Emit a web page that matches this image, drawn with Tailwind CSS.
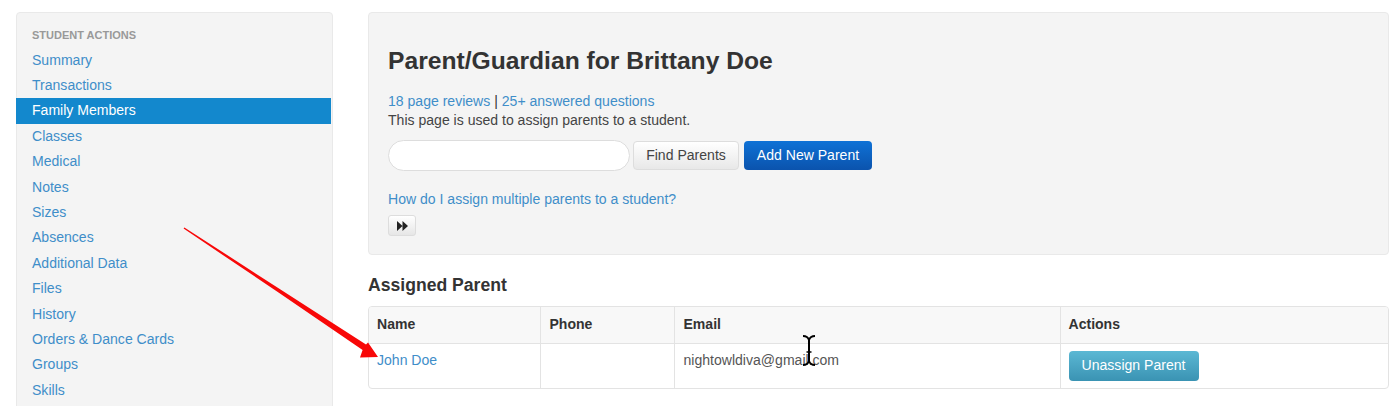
<!DOCTYPE html>
<html lang="en">
<head>
  <meta charset="UTF-8">
  <title>Parent/Guardian</title>
  <script src="https://cdn.jsdelivr.net/npm/@tailwindcss/browser@4"></script>
</head>
<body class="bg-white font-['Liberation_Sans',Arial,sans-serif] text-[14.05px] text-[#333] overflow-hidden">
  <div class="relative h-[406px] overflow-hidden">
    <div class="flex items-start gap-[35px] pl-[16px] pr-[7px] pt-[12px]">

      <!-- Sidebar -->
      <aside class="w-[317px] h-[420px] shrink-0 bg-[#f4f4f4] border border-[#e9e9e9] rounded-[4px] pt-[15px]">
        <div class="pl-[15px] h-[14px] leading-[14px] text-[11px] font-bold text-[#999] uppercase">Student Actions</div>
        <nav class="mt-[5.6px] -ml-px w-[315px] flex flex-col leading-[25.4px] text-[#3f8ec9]">
          <a class="pl-[16px] h-[25.4px]">Summary</a>
          <a class="pl-[16px] h-[25.4px]">Transactions</a>
          <a class="pl-[16px] h-[25.4px] bg-[#1388cd] text-white">Family Members</a>
          <a class="pl-[16px] h-[25.4px]">Classes</a>
          <a class="pl-[16px] h-[25.4px]">Medical</a>
          <a class="pl-[16px] h-[25.4px]">Notes</a>
          <a class="pl-[16px] h-[25.4px]">Sizes</a>
          <a class="pl-[16px] h-[25.4px]">Absences</a>
          <a class="pl-[16px] h-[25.4px]">Additional Data</a>
          <a class="pl-[16px] h-[25.4px]">Files</a>
          <a class="pl-[16px] h-[25.4px]">History</a>
          <a class="pl-[16px] h-[25.4px]">Orders &amp; Dance Cards</a>
          <a class="pl-[16px] h-[25.4px]">Groups</a>
          <a class="pl-[16px] h-[25.4px]">Skills</a>
        </nav>
      </aside>

      <!-- Main -->
      <main class="flex-1 min-w-0">
        <section class="h-[243px] bg-[#f4f4f4] border border-[#e9e9e9] rounded-[4px] pl-[19px] pt-[31px]">
          <h1 class="text-[24.65px] leading-[34px] font-bold text-[#333]">Parent/Guardian for Brittany Doe</h1>
          <p class="mt-[13px] leading-[20px] text-[#3f8ec9]">18 page reviews <span class="text-[#333]">|</span> 25+ answered questions</p>
          <p class="leading-[19px] text-[#444]">This page is used to assign parents to a student.</p>
          <div class="mt-[10px] flex items-center">
            <input type="text" class="w-[242px] h-[31px] bg-white border border-[#ddd] rounded-full">
            <button class="ml-[3px] w-[106px] h-[29px] rounded-[4px] border border-[#ddd] bg-linear-to-b from-[#fff] to-[#e8e8e8] text-[#444]">Find Parents</button>
            <button class="ml-[5px] w-[128px] h-[29px] rounded-[4px] bg-linear-to-b from-[#0f72d6] to-[#0b53ad] text-white">Add New Parent</button>
          </div>
          <a class="block mt-[18px] leading-[20px] text-[#3f8ec9]">How do I assign multiple parents to a student?</a>
          <button class="mt-[6px] flex items-center justify-center w-[28px] h-[21px] rounded-[3px] border border-[#ddd] bg-linear-to-b from-[#fff] to-[#e6e6e6]">
            <svg width="11" height="10" viewBox="0 0 11 10"><path d="M0 0L5.5 5L0 10ZM5.5 0L11 5L5.5 10Z" fill="#222"/></svg>
          </button>
        </section>

        <h2 class="mt-[18px] text-[17.6px] leading-[24px] font-bold text-[#333]">Assigned Parent</h2>

        <div class="mt-[9px] border border-[#e3e3e3] rounded-[4px] overflow-hidden">
          <table class="w-full table-fixed border-collapse">
            <thead>
              <tr class="h-[36px] bg-[#f8f8f8] border-b border-[#e3e3e3] text-left">
                <th class="w-[171px] pl-[8px] font-bold">Name</th>
                <th class="w-[134px] pl-[9px] border-l border-[#e3e3e3] font-bold">Phone</th>
                <th class="w-[386px] pl-[9px] border-l border-[#e3e3e3] font-bold">Email</th>
                <th class="pl-[8px] border-l border-[#e3e3e3] font-bold">Actions</th>
              </tr>
            </thead>
            <tbody>
              <tr class="h-[45px]">
                <td class="pl-[8px] pb-[11px] pt-0 text-[#3f8ec9]">John Doe</td>
                <td class="border-l border-[#e3e3e3]"></td>
                <td class="pl-[9px] pb-[11px] border-l border-[#e3e3e3] text-[#555]">nightowldiva@gmail.com</td>
                <td class="pl-[8px] border-l border-[#e3e3e3]">
                  <button class="w-[130px] h-[30px] rounded-[4px] bg-linear-to-b from-[#5bb8d4] to-[#3a93b3] text-white">Unassign Parent</button>
                </td>
              </tr>
            </tbody>
          </table>
        </div>
      </main>
    </div>

    <!-- Red annotation arrow -->
    <svg class="absolute left-0 top-0 pointer-events-none" width="1396" height="406" viewBox="0 0 1396 406">
      <path d="M183.6 228.6L184.4 227.4L280.5 289.5L366 344.5L368 342.5L378 357L360 357.5L362.6 350L278.5 292.5Z" fill="#f80808"/>
    </svg>

    <!-- Text cursor over the email -->
    <svg class="absolute left-[802px] top-[334px] pointer-events-none" width="14" height="33" viewBox="0 0 14 33">
      <path d="M1 2C4 2 6 3 7 6C8 3 10 2 13 2M7 6V27M1 31C4 31 6 30 7 27C8 30 10 31 13 31" fill="none" stroke="#000" stroke-width="2"/>
      <path d="M4.5 18H9.5" stroke="#000" stroke-width="1.5"/>
    </svg>
  </div>
</body>
</html>
